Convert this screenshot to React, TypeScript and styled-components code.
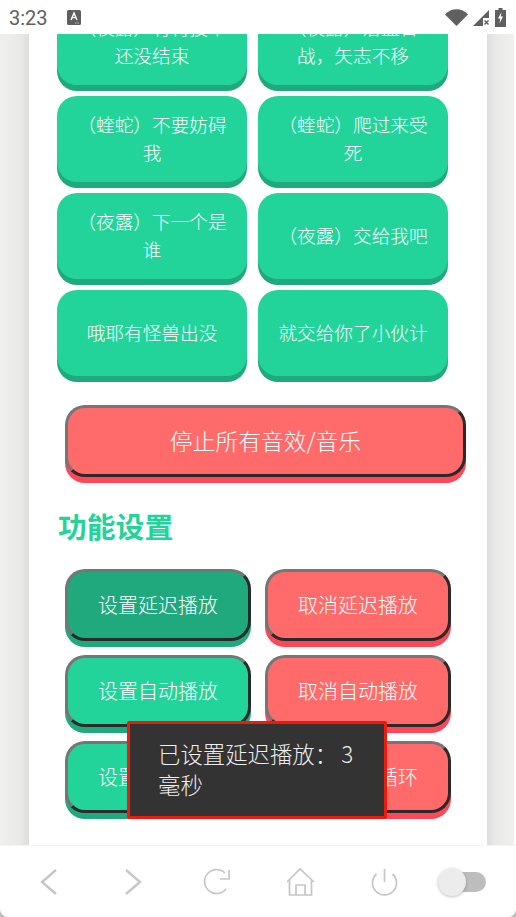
import { createGlobalStyle } from 'styled-components';
import styled from 'styled-components';

const GlobalStyle = createGlobalStyle`
  html, body {
    margin: 0;
    padding: 0;
    background: #bdbdbd;
  }
  * {
    box-sizing: border-box;
  }
`;

const voiceRows = [
  ['（夜露）有特技中还没结束', '（夜露）浴血奋战，矢志不移'],
  ['（蝰蛇）不要妨碍我', '（蝰蛇）爬过来受死'],
  ['（夜露）下一个是谁', '（夜露）交给我吧'],
  ['哦耶有怪兽出没', '就交给你了小伙计'],
];

const settingRows = [
  { set: '设置延迟播放', cancel: '取消延迟播放', active: true },
  { set: '设置自动播放', cancel: '取消自动播放', active: false },
  { set: '设置播放循环', cancel: '取消播放循环', active: false },
];

export default function App() {
  return (
    <Screen>
      <GlobalStyle />
      <StatusBar>
        <Time>3:23</Time>
        <NoticeIcon viewBox="0 0 14 15">
          <rect width="14" height="15" rx="1.5" fill="#5f5f5f" />
          <path d="M4 10 L7 3 L10 10 M5.2 7.6 H8.8" stroke="#fff" strokeWidth="1.4" fill="none" />
          <path d="M8 13 H12" stroke="#c8c8c8" strokeWidth="1" strokeDasharray="1 0.6" />
        </NoticeIcon>
        <StatusRight>
          <svg width="23" height="17" viewBox="0 0 23 17">
            <path d="M0 5.5 C6 -1.5 17 -1.5 23 5.5 L11.5 17 Z" fill="#5f5f5f" />
          </svg>
          <svg width="17" height="17" viewBox="0 0 17 17">
            <path d="M0 17 L16 1 V9 H10 V17 Z" fill="#5f5f5f" />
            <path d="M11.5 11.5 L15.5 15.5 M15.5 11.5 L11.5 15.5" stroke="#5f5f5f" strokeWidth="1.4" />
          </svg>
          <svg width="11" height="19" viewBox="0 0 11 19">
            <path d="M3.5 0 H7.5 V2 H11 V19 H0 V2 H3.5 Z" fill="#5f5f5f" />
            <path d="M6.5 4 L3 10.5 H5.2 L4.5 15.5 L8 8.5 H5.8 Z" fill="#fff" />
          </svg>
        </StatusRight>
      </StatusBar>
      <Viewport>
        <Gutter />
        <Panel>
          <VoiceGrid>
            {voiceRows.flat().map(label => (
              <VoiceButton key={label}>{label}</VoiceButton>
            ))}
          </VoiceGrid>
          <StopButton>停止所有音效/音乐</StopButton>
          <SectionTitle>功能设置</SectionTitle>
          <SettingGrid>
            {settingRows.map(row => (
              <SettingRow key={row.set}>
                <SettingButton $active={row.active}>{row.set}</SettingButton>
                <SettingButton $danger>{row.cancel}</SettingButton>
              </SettingRow>
            ))}
          </SettingGrid>
          <Toast>
            已设置延迟播放：<ToastValue>3</ToastValue>毫秒
          </Toast>
        </Panel>
        <Gutter $right />
      </Viewport>
      <BottomBar>
        <NavIcons>
          <NavIcon viewBox="0 0 32 32" $weight={2.4}>
            <path d="M23 4 L9 16 L23 28" />
          </NavIcon>
          <NavIcon viewBox="0 0 32 32" $weight={2.4}>
            <path d="M9 4 L23 16 L9 28" />
          </NavIcon>
          <NavIcon viewBox="0 0 32 32">
            <path d="M24 7 A12 12 0 1 0 25 23" />
            <path d="M28 4 V13 H19" />
          </NavIcon>
          <NavIcon viewBox="0 0 32 32">
            <path d="M2 16 L15 3 L29 16" />
            <path d="M4.5 14 V29 H26.5 V14" />
            <path d="M11 29 V19 H20 V29" />
          </NavIcon>
          <NavIcon viewBox="0 0 32 32">
            <path d="M7.5 8 A12 12 0 1 0 23.5 8" />
            <path d="M15.5 3 V16" />
          </NavIcon>
        </NavIcons>
        <Toggle>
          <Knob />
        </Toggle>
      </BottomBar>
    </Screen>
  );
}

const Screen = styled.div`
  width: 516px;
  height: 917px;
  display: flex;
  flex-direction: column;
  overflow: hidden;
  font-family: 'Noto Sans CJK SC', 'Noto Sans', sans-serif;
`;

const StatusBar = styled.div`
  height: 34px;
  flex-shrink: 0;
  background: #fff;
  display: flex;
  align-items: center;
  padding: 1px 10px 0 9px;
  color: #5f5f5f;
`;

const Time = styled.span`
  font-family: Roboto, sans-serif;
  font-size: 20px;
  width: 58px;
`;

const NoticeIcon = styled.svg`
  width: 14px;
  height: 15px;
`;

const StatusRight = styled.div`
  margin-left: auto;
  display: flex;
  align-items: center;
  gap: 5px;
`;

const Viewport = styled.div`
  flex: 1;
  min-height: 0;
  display: flex;
  background: #fff;
  overflow: hidden;
`;

const Gutter = styled.div<{ $right?: boolean }>`
  width: ${props => (props.$right ? '27px' : '29px')};
  flex-shrink: 0;
  background: linear-gradient(
    ${props => (props.$right ? 'to left' : 'to right')},
    #f0f1ee,
    #e9eae7 70%,
    #dededc
  );
`;

const Panel = styled.div`
  width: 458px;
  flex-shrink: 0;
  position: relative;
  background: #fff;
  padding: 0 20px 0 28px;
`;

const VoiceGrid = styled.div`
  display: grid;
  grid-template-columns: 190px 190px;
  column-gap: 11px;
  row-gap: 11px;
  margin-top: -35px;
`;

const VoiceButton = styled.button`
  height: 86px;
  padding: 0 20px 2px;
  border: none;
  border-radius: 20px;
  background: #23d49a;
  box-shadow: 0 6px 0 #1fa97d;
  color: #fff;
  font-family: inherit;
  font-size: 18.67px;
  font-weight: 300;
  line-height: 28px;
`;

const StopButton = styled.button`
  display: block;
  width: 401px;
  height: 72px;
  margin: 29px 0 0 8px;
  padding: 0 0 2px;
  border: 3px solid;
  border-color: #767676 #2a2a2a #2a2a2a #767676;
  border-radius: 20px;
  background: #ff6b6b;
  box-shadow: 0 6px 0 #ff4757;
  color: #fff;
  font-family: inherit;
  font-size: 22.8px;
  font-weight: 300;
`;

const SectionTitle = styled.h2`
  margin: 29px 0 0 1px;
  color: #23d49a;
  font-size: 28.8px;
  line-height: 40px;
  font-weight: 700;
`;

const SettingGrid = styled.div`
  display: flex;
  flex-direction: column;
  gap: 14px;
  margin: 23px 0 0 8px;
`;

const SettingRow = styled.div`
  display: flex;
  gap: 14px;
`;

const SettingButton = styled.button<{ $active?: boolean; $danger?: boolean }>`
  width: 186px;
  height: 72px;
  padding: 0 0 2px;
  border: 3px solid;
  border-color: #767676 #2a2a2a #2a2a2a #767676;
  border-radius: 20px;
  background: ${props => (props.$danger ? '#ff6b6b' : props.$active ? '#1fa97d' : '#23d49a')};
  box-shadow: 0 6px 0 ${props => (props.$danger ? '#ff4757' : '#1fa97d')};
  color: #fff;
  font-family: inherit;
  font-size: 20px;
  font-weight: 300;
`;

const Toast = styled.div`
  position: absolute;
  left: 98px;
  top: 687px;
  width: 260px;
  height: 98px;
  padding: 14px 28px;
  border: 3px solid #f01a0c;
  border-radius: 2px;
  background: #333;
  color: #eee;
  font-size: 22.4px;
  font-weight: 300;
  line-height: 31px;
`;

const ToastValue = styled.span`
  margin-left: 4px;
`;

const BottomBar = styled.div`
  height: 72px;
  flex-shrink: 0;
  background: #fff;
  border-top: 1px solid #f5f5f5;
  border-radius: 0 0 8px 8px;
  display: flex;
  align-items: center;
  padding: 0 30px 0 33px;
`;

const NavIcons = styled.div`
  display: flex;
  gap: 52px;
`;

const NavIcon = styled.svg<{ $weight?: number }>`
  width: 32px;
  height: 32px;
  fill: none;
  stroke: #c6c6c6;
  stroke-width: ${props => props.$weight ?? 1.7};
`;

const Toggle = styled.div`
  position: relative;
  margin-left: auto;
  width: 48px;
  height: 20px;
  border-radius: 10px;
  background: #bdbdbd;
`;

const Knob = styled.div`
  position: absolute;
  left: 0;
  top: -4px;
  width: 28px;
  height: 28px;
  border-radius: 50%;
  background: #ececec;
  box-shadow: 0 1px 3px rgba(0, 0, 0, 0.25);
`;
